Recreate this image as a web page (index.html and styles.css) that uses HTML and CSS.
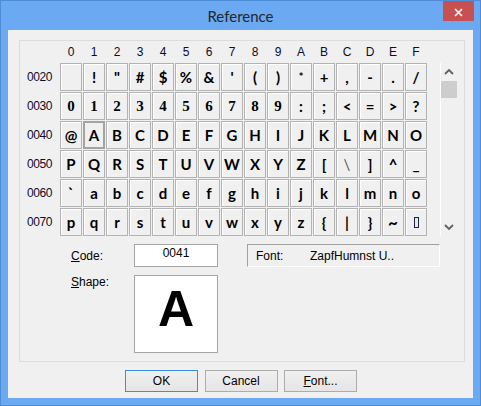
FILE: index.html
```html
<!DOCTYPE html>
<html>
<head>
<meta charset="utf-8">
<link rel="stylesheet" href="styles.css">
</head>
<body>
<div class="window">
  <div class="titlebar">
    <span class="title">Reference</span>
    <div class="close"><svg width="9" height="9" viewBox="0 0 9 9"><path d="M1 1L8 8M8 1L1 8" stroke="#fff" stroke-width="1.6" fill="none"/></svg></div>
  </div>
  <div class="client">
    <div class="group">
      <div class="chart">
        <div class="grid">
          <div class="hd"></div>
          <div class="hd">0</div><div class="hd">1</div><div class="hd">2</div><div class="hd">3</div>
          <div class="hd">4</div><div class="hd">5</div><div class="hd">6</div><div class="hd">7</div>
          <div class="hd">8</div><div class="hd">9</div><div class="hd">A</div><div class="hd">B</div>
          <div class="hd">C</div><div class="hd">D</div><div class="hd">E</div><div class="hd">F</div>

          <div class="rl">0020</div>
          <div class="c"></div><div class="c">!</div><div class="c">"</div><div class="c">#</div>
          <div class="c">$</div><div class="c">%</div><div class="c">&amp;</div><div class="c">'</div>
          <div class="c">(</div><div class="c">)</div><div class="c small">*</div><div class="c">+</div>
          <div class="c">,</div><div class="c">-</div><div class="c">.</div><div class="c">/</div>

          <div class="rl">0030</div>
          <div class="c dg">0</div><div class="c dg">1</div><div class="c dg">2</div><div class="c dg">3</div>
          <div class="c dg">4</div><div class="c dg">5</div><div class="c dg">6</div><div class="c dg">7</div>
          <div class="c dg">8</div><div class="c dg">9</div><div class="c">:</div><div class="c">;</div>
          <div class="c">&lt;</div><div class="c">=</div><div class="c">&gt;</div><div class="c">?</div>

          <div class="rl">0040</div>
          <div class="c">@</div><div class="c sel">A</div><div class="c">B</div><div class="c">C</div>
          <div class="c">D</div><div class="c">E</div><div class="c">F</div><div class="c">G</div>
          <div class="c">H</div><div class="c">I</div><div class="c">J</div><div class="c">K</div>
          <div class="c">L</div><div class="c">M</div><div class="c">N</div><div class="c">O</div>

          <div class="rl">0050</div>
          <div class="c">P</div><div class="c">Q</div><div class="c">R</div><div class="c">S</div>
          <div class="c">T</div><div class="c">U</div><div class="c">V</div><div class="c">W</div>
          <div class="c">X</div><div class="c">Y</div><div class="c">Z</div><div class="c">[</div>
          <div class="c thin">\</div><div class="c">]</div><div class="c">^</div><div class="c">_</div>

          <div class="rl">0060</div>
          <div class="c">`</div><div class="c">a</div><div class="c">b</div><div class="c">c</div>
          <div class="c">d</div><div class="c">e</div><div class="c">f</div><div class="c">g</div>
          <div class="c">h</div><div class="c">i</div><div class="c">j</div><div class="c">k</div>
          <div class="c">l</div><div class="c">m</div><div class="c">n</div><div class="c">o</div>

          <div class="rl">0070</div>
          <div class="c">p</div><div class="c">q</div><div class="c">r</div><div class="c">s</div>
          <div class="c">t</div><div class="c">u</div><div class="c">v</div><div class="c">w</div>
          <div class="c">x</div><div class="c">y</div><div class="c">z</div><div class="c">{</div>
          <div class="c">|</div><div class="c">}</div><div class="c tilde">~</div><div class="c"><span class="delbox"></span></div>
        </div>
        <div class="scroll">
          <svg class="arrow" width="16" height="17" viewBox="0 0 16 17"><path d="M4 11L8 7L12 11" stroke="#606060" stroke-width="1.8" fill="none"/></svg>
          <div class="thumb"></div>
          <div class="track"></div>
          <svg class="arrow" width="16" height="17" viewBox="0 0 16 17"><path d="M4 6L8 10L12 6" stroke="#606060" stroke-width="1.8" fill="none"/></svg>
        </div>
      </div>
      <div class="info">
        <div class="lbl code-lbl"><u>C</u>ode:</div>
        <div class="codebox">0041</div>
        <div class="fontpanel"><span class="fp-lbl">Font:</span><span>ZapfHumnst U..</span></div>
        <div class="lbl shape-lbl"><u>S</u>hape:</div>
        <div class="shapebox">A</div>
      </div>
    </div>
    <div class="buttons">
      <button class="btn def">OK</button>
      <button class="btn">Cancel</button>
      <button class="btn"><u>F</u>ont...</button>
    </div>
  </div>
</div>
</body>
</html>
```
FILE: styles.css
```css
html, body {
  margin: 0;
  padding: 0;
}
body {
  background: #6ba9f2;
}
.window {
  width: 481px;
  height: 406px;
  box-sizing: border-box;
  border: 1px solid #4d8cd6;
  background: #6ba9f2;
  position: relative;
  display: flex;
  flex-direction: column;
  font-family: "Liberation Sans", Arial, sans-serif;
  font-size: 12px;
  color: #000;
}
.titlebar {
  height: 29px;
  display: flex;
  align-items: center;
  justify-content: center;
}
.title {
  font-family: Lato, "Open Sans", sans-serif;
  font-size: 15px;
  color: #262626;
  padding-top: 1px;
}
.close {
  position: absolute;
  top: 0;
  right: 6px;
  width: 31px;
  height: 20px;
  background: #c75050;
  display: flex;
  align-items: center;
  justify-content: center;
}
.close svg {
  display: block;
  margin-top: 2px;
}
.client {
  margin: 0 7px 7px 7px;
  height: 368px;
  background: #f0f0f0;
  box-sizing: border-box;
  padding-top: 10px;
}
.group {
  margin-left: 11px;
  width: 446px;
  height: 322px;
  box-sizing: border-box;
  border: 1px solid #dcdcdc;
}
.chart {
  display: flex;
  align-items: flex-start;
}
.grid {
  display: grid;
  grid-template-columns: 39px repeat(16, 22px);
  grid-template-rows: 21px repeat(6, 28px);
  gap: 1px;
}
.hd {
  display: flex;
  align-items: flex-end;
  justify-content: center;
  padding-bottom: 3px;
  line-height: 13px;
  color: #0c0c2c;
}
.rl {
  display: flex;
  align-items: center;
  justify-content: flex-end;
  padding-right: 7px;
  color: #0c0c2c;
  letter-spacing: -0.4px;
}
.c {
  box-sizing: border-box;
  border: 1px solid #b3b3b3;
  box-shadow: inset 1px 1px 0 #ffffff;
  display: flex;
  align-items: center;
  justify-content: center;
  font-family: Lato, "Open Sans", sans-serif;
  font-weight: 700;
  font-size: 15px;
  line-height: 1;
}
.c.dg {
  font-family: "Liberation Serif", serif;
  font-size: 15px;
}
.c.sel {
  border: 2px solid #a3a3a3;
  box-shadow: none;
}
.c.small {
  font-size: 11px;
  align-items: flex-start;
  padding-top: 7px;
}
.c.thin {
  font-weight: 400;
  color: #555;
}
.c.tilde {
  font-size: 17px;
}
.delbox {
  display: block;
  width: 5px;
  height: 11px;
  box-sizing: border-box;
  border: 1px solid #202040;
  background: #dfeee8;
}
.scroll {
  margin: 22px 0 0 13px;
  width: 17px;
  height: 173px;
  box-sizing: border-box;
  border-left: 1px solid #ffffff;
  display: flex;
  flex-direction: column;
}
.arrow {
  display: block;
}
.thumb {
  margin-top: 1px;
  height: 17px;
  background: #cdcdcd;
}
.track {
  flex: 1;
}
.info {
  display: grid;
  grid-template-columns: 63px 84px 29px 193px;
  grid-template-rows: 23px 78px;
  row-gap: 8px;
  margin: 8px 0 0 51px;
}
.lbl {
  line-height: 15px;
}
.code-lbl {
  grid-column: 1;
  grid-row: 1;
  align-self: center;
  padding-top: 2px;
}
.shape-lbl {
  grid-column: 1;
  grid-row: 2;
  align-self: start;
}
.codebox {
  grid-column: 2;
  grid-row: 1;
  box-sizing: border-box;
  border: 1px solid #a5a5a5;
  background: #ffffff;
  text-align: center;
  line-height: 16px;
}
.fontpanel {
  grid-column: 4;
  grid-row: 1;
  box-sizing: border-box;
  border: 1px solid;
  border-color: #a0a0a0 #ffffff #ffffff #a0a0a0;
  display: flex;
  align-items: center;
  padding-left: 8px;
  padding-top: 1px;
}
.fp-lbl {
  width: 54px;
}
.shapebox {
  grid-column: 2;
  grid-row: 2;
  box-sizing: border-box;
  border: 1px solid #a5a5a5;
  background: #ffffff;
  display: flex;
  justify-content: center;
  align-items: flex-start;
  padding-top: 8px;
  font-family: "Liberation Sans", Arial, sans-serif;
  font-weight: 700;
  font-size: 50px;
  line-height: 1;
}
.buttons {
  display: flex;
  gap: 6.5px;
  margin: 8px 0 0 117px;
}
.btn {
  width: 73px;
  height: 22px;
  box-sizing: border-box;
  border: 1px solid #acacac;
  background: linear-gradient(#f0f0f0, #e5e5e5);
  font: inherit;
  color: #000;
  padding: 0;
  display: flex;
  align-items: center;
  justify-content: center;
}
.btn.def {
  border-color: #3c8de5;
}
```
